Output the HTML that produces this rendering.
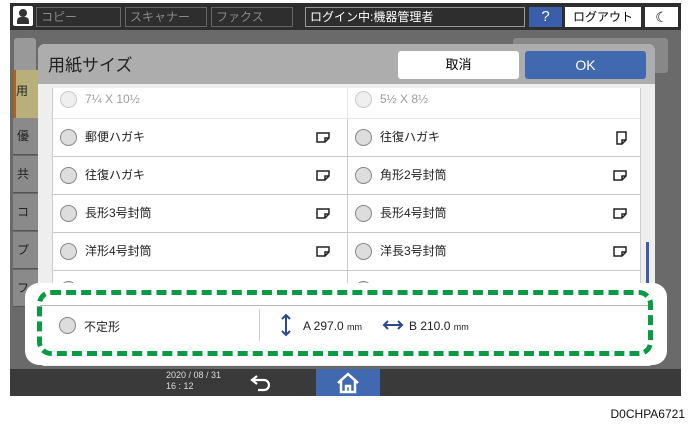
<!DOCTYPE html>
<html><head><meta charset="utf-8"><style>
*{margin:0;padding:0;box-sizing:border-box}
body{width:691px;height:427px;background:#fff;position:relative;overflow:hidden;font-family:"Liberation Sans","Noto Sans CJK JP",sans-serif}
.a{position:absolute}
.scr{left:10px;top:3px;width:671px;height:393px;background:#6a6a6a}
.top{left:10px;top:3px;width:671px;height:27px;background:#2e2e2e}
.tab{top:7px;height:20px;border:1px solid #666;color:#888;font-size:12px;line-height:18px;padding-left:4px}
.row{position:absolute;left:0;width:589px;height:38px;border-bottom:1px solid #c8c8c8;background:#fff}
.cell{position:absolute;top:0;height:37px;font-size:12px;color:#222;line-height:37px}
.rad{position:absolute;left:7px;top:10px;width:17px;height:17px;border-radius:50%;background:#ddd;border:1px solid #888}
.ic{position:absolute;top:13px}
.side{position:absolute;left:13px;width:25px;height:37px;border-bottom:1px solid #555;font-size:12px;color:#222;line-height:37px;padding-left:4px;background:#8a8a8a}
</style></head><body>
<div class="a scr"></div>
<div class="a top"></div>
<div class="a" style="left:13px;top:6px;width:20px;height:20px;background:#fff;border-radius:2px"><div class="a" style="left:6px;top:3px;width:8px;height:8px;border-radius:50%;background:#333"></div><div class="a" style="left:4px;top:11px;width:12px;height:7px;background:#333;border-radius:4px 4px 0 0"></div></div>
<div class="a tab" style="left:36px;width:85px">コピー</div>
<div class="a tab" style="left:125px;width:82px">スキャナー</div>
<div class="a tab" style="left:211px;width:82px">ファクス</div>
<div class="a tab" style="left:305px;width:220px;color:#fff;border-color:#999">ログイン中:機器管理者</div>
<div class="a" style="left:529px;top:7px;width:33px;height:20px;background:#3b5eaa;color:#fff;text-align:center;font-size:15px;line-height:20px">?</div>
<div class="a" style="left:565px;top:7px;width:76px;height:20px;background:#fff;font-size:12px;line-height:20px;text-align:center">ログアウト</div>
<div class="a" style="left:645px;top:7px;width:33px;height:20px;background:#fff;font-size:14px;line-height:20px;text-align:center">☾</div>
<div class="a" style="left:14px;top:38px;width:22px;height:48px;background:#999;border-radius:3px"></div>
<div class="a" style="left:13px;top:70px;width:25px;height:48px;background:#b8b07a;border-left:3px solid #b06020;font-size:12px;line-height:36px;padding-left:2px;padding-top:0">　</div>
<div class="a" style="left:16px;top:82px;font-size:12px;color:#222">用</div>
<div class="side" style="top:118px">優</div>
<div class="side" style="top:156px">共</div>
<div class="side" style="top:194px">コ</div>
<div class="side" style="top:232px">プ</div>
<div class="side" style="top:270px">フ</div>
<div class="a" style="left:513px;top:38px;width:155px;height:35px;background:#888;border-radius:3px"></div>
<!-- dialog -->
<div class="a" style="left:38px;top:44px;width:617px;height:322px;background:#eeeeee;border-radius:7px;overflow:hidden">
<div class="a" style="left:0;top:0;width:617px;height:40px;background:#adadad"></div>
<div class="a" style="left:10px;top:7px;font-size:17px;color:#222">用紙サイズ</div>
<div class="a" style="left:360px;top:7px;width:121px;height:28px;background:#fff;border-radius:3px;text-align:center;line-height:28px;font-size:13px">取消</div>
<div class="a" style="left:487px;top:7px;width:121px;height:28px;background:#4169b0;border-radius:3px;text-align:center;line-height:28px;font-size:14px;color:#fff">OK</div>
<div class="a" style="left:14px;top:44px;width:589px;height:245px;background:#fff;border-left:1px solid #ccc;border-right:1px solid #ccc;overflow:hidden">
 <div class="row" style="top:-7px;opacity:.45"><div class="cell" style="left:0;width:294px"><div class="rad"></div><span style="position:absolute;left:32px">7¼ X 10½</span></div><div class="cell" style="left:294px;width:295px;border-left:1px solid #ccc"><div class="rad"></div><span style="position:absolute;left:32px">5½ X 8½</span></div></div>
 <div class="row" style="top:31px"><div class="cell" style="left:0;width:294px"><div class="rad"></div><span style="position:absolute;left:32px">郵便ハガキ</span><svg class="ic" style="left:263px" width="14" height="11"><path d="M1 1H13V6L9 10H1Z M9 10V6H13" fill="none" stroke="#222" stroke-width="1.5"/></svg></div><div class="cell" style="left:294px;width:295px;border-left:1px solid #ccc"><div class="rad"></div><span style="position:absolute;left:32px">往復ハガキ</span><svg class="ic" style="left:268px;top:12px" width="11" height="14"><path d="M1 1H10V9L6 13H1Z M6 13V9H10" fill="none" stroke="#222" stroke-width="1.5"/></svg></div></div>
 <div class="row" style="top:69px"><div class="cell" style="left:0;width:294px"><div class="rad"></div><span style="position:absolute;left:32px">往復ハガキ</span><svg class="ic" style="left:263px" width="14" height="11"><path d="M1 1H13V6L9 10H1Z M9 10V6H13" fill="none" stroke="#222" stroke-width="1.5"/></svg></div><div class="cell" style="left:294px;width:295px;border-left:1px solid #ccc"><div class="rad"></div><span style="position:absolute;left:32px">角形2号封筒</span><svg class="ic" style="left:265px" width="14" height="11"><path d="M1 1H13V6L9 10H1Z M9 10V6H13" fill="none" stroke="#222" stroke-width="1.5"/></svg></div></div>
 <div class="row" style="top:107px"><div class="cell" style="left:0;width:294px"><div class="rad"></div><span style="position:absolute;left:32px">長形3号封筒</span><svg class="ic" style="left:263px" width="14" height="11"><path d="M1 1H13V6L9 10H1Z M9 10V6H13" fill="none" stroke="#222" stroke-width="1.5"/></svg></div><div class="cell" style="left:294px;width:295px;border-left:1px solid #ccc"><div class="rad"></div><span style="position:absolute;left:32px">長形4号封筒</span><svg class="ic" style="left:265px" width="14" height="11"><path d="M1 1H13V6L9 10H1Z M9 10V6H13" fill="none" stroke="#222" stroke-width="1.5"/></svg></div></div>
 <div class="row" style="top:145px"><div class="cell" style="left:0;width:294px"><div class="rad"></div><span style="position:absolute;left:32px">洋形4号封筒</span><svg class="ic" style="left:263px" width="14" height="11"><path d="M1 1H13V6L9 10H1Z M9 10V6H13" fill="none" stroke="#222" stroke-width="1.5"/></svg></div><div class="cell" style="left:294px;width:295px;border-left:1px solid #ccc"><div class="rad"></div><span style="position:absolute;left:32px">洋長3号封筒</span><svg class="ic" style="left:265px" width="14" height="11"><path d="M1 1H13V6L9 10H1Z M9 10V6H13" fill="none" stroke="#222" stroke-width="1.5"/></svg></div></div>
 <div class="row" style="top:183px"><div class="cell" style="left:0;width:294px"><div class="rad"></div></div><div class="cell" style="left:294px;width:295px;border-left:1px solid #ccc"><div class="rad"></div></div></div>
</div>
<div class="a" style="left:608px;top:198px;width:3px;height:46px;background:#3b5eaa"></div>
</div>
<!-- bottom bar -->
<div class="a" style="left:10px;top:369px;width:671px;height:27px;background:#3a3a3a"></div>
<div class="a" style="left:166px;top:370px;color:#ddd;font-size:9px;line-height:11px">2020 / 08 / 31<br>16 : 12</div>
<svg class="a" style="left:249px;top:373px" width="24" height="20" viewBox="0 0 24 20"><path d="M8 3 L3 7 L8 11 M3 7 H15 A5 5 0 0 1 15 17 H9" fill="none" stroke="#fff" stroke-width="2.2"/></svg>
<div class="a" style="left:316px;top:369px;width:64px;height:27px;background:#4169b0"></div>
<svg class="a" style="left:336px;top:372px" width="24" height="22" viewBox="0 0 24 22"><path d="M2 11 L12 2 L22 11 M5 9 V20 H19 V9 M10 20 V14 H14 V20" fill="none" stroke="#fff" stroke-width="2.5"/></svg>
<!-- highlight panel -->
<div class="a" style="left:25px;top:283px;width:642px;height:82px;background:#fff;border-radius:14px"></div>
<div class="a" style="left:40px;top:305px;width:610px;height:1px;background:#bbb"></div>
<div class="a" style="left:259px;top:309px;width:1px;height:32px;background:#ccc"></div>
<div class="a" style="left:59px;top:317px;width:17px;height:17px;border-radius:50%;background:#ddd;border:1px solid #888"></div>
<div class="a" style="left:84px;top:318px;font-size:12px;color:#222">不定形</div>
<svg class="a" style="left:280px;top:313px" width="12" height="24"><path d="M6 2V22 M2 6L6 2L10 6 M2 18L6 22L10 18" fill="none" stroke="#2a4a90" stroke-width="2"/></svg>
<div class="a" style="left:303px;top:319px;font-size:12px;color:#222">A 297.0 <span style="font-size:9px">mm</span></div>
<svg class="a" style="left:382px;top:319px" width="22" height="12"><path d="M2 6H20 M6 2L2 6L6 10 M16 2L20 6L16 10" fill="none" stroke="#2a4a90" stroke-width="2"/></svg>
<div class="a" style="left:409px;top:319px;font-size:12px;color:#222">B 210.0 <span style="font-size:9px">mm</span></div>
<div class="a" style="left:37px;top:290px;width:616px;height:66px;border:5px dashed #0a9a43;border-radius:14px"></div>
<div class="a" style="right:6px;top:407px;font-size:12px;color:#111">D0CHPA6721</div>
</body></html>
